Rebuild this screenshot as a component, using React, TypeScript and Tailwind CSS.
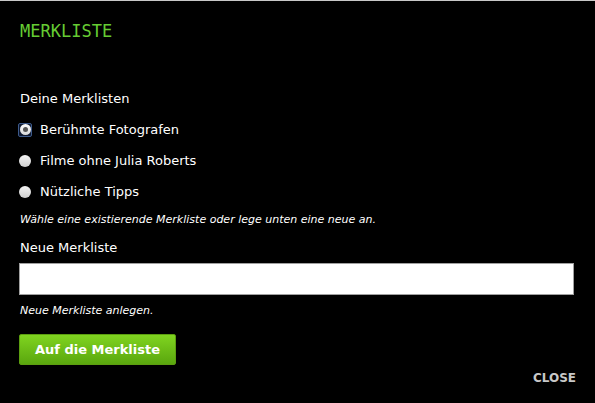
import React from "react";

function Radio({ checked }: { checked?: boolean }) {
  if (checked) {
    return (
      <span className="flex h-[14px] w-[14px] items-center justify-center rounded-[2px] border border-[#3d5a8a] bg-[#0d1830]">
        <span className="flex h-[11px] w-[11px] items-center justify-center rounded-full bg-gradient-to-b from-[#ffffff] to-[#d8d8d8]">
          <span className="h-[5px] w-[5px] rounded-full bg-[#555]" />
        </span>
      </span>
    );
  }
  return (
    <span className="flex h-[14px] w-[14px] items-center justify-center">
      <span className="h-[12px] w-[12px] rounded-full bg-gradient-to-b from-[#f4f4f4] to-[#cfcfcf]" />
    </span>
  );
}

export default function App() {
  const lists = [
    { name: "Berühmte Fotografen", checked: true },
    { name: "Filme ohne Julia Roberts" },
    { name: "Nützliche Tipps" },
  ];
  return (
    <div
      className="flex h-[403px] w-[595px] flex-col border-t border-[#c8c8c8] bg-black pl-[20px] pr-[19px] text-white"
      style={{ fontFamily: "Verdana, 'DejaVu Sans', sans-serif" }}
    >
      <div
        className="mt-[19px] h-[22px] text-[17px] leading-[22px] text-[#66cc33]"
        style={{ fontFamily: "'DejaVu Sans Mono', monospace" }}
      >
        MERKLISTE
      </div>
      <div className="mt-[49px] text-[13px] leading-[16px]">Deine Merklisten</div>
      <div className="mt-[7px] flex flex-col">
        {lists.map((l) => (
          <label key={l.name} className="flex h-[31px] items-center text-[13px] leading-[16px]">
            <span className="ml-[-2px] mr-[8px]">
              <Radio checked={l.checked} />
            </span>
            {l.name}
          </label>
        ))}
      </div>
      <div className="mt-[6px] text-[11px] italic leading-[14px]">
        Wähle eine existierende Merkliste oder lege unten eine neue an.
      </div>
      <div className="mt-[13px] text-[13px] leading-[16px]">Neue Merkliste</div>
      <div className="ml-[-1px] mt-[7px] h-[32px] w-[555px] border border-[#a0a0a0] bg-white" />
      <div className="mt-[9px] text-[11px] italic leading-[14px]">Neue Merkliste anlegen.</div>
      <div className="ml-[-1px] mt-[16px] flex h-[31px] w-[157px] items-center justify-center rounded-[2px] border border-[#5c9e10] bg-gradient-to-b from-[#80d420] to-[#5aa70e] text-[13px] font-bold text-white">
        Auf die Merkliste
      </div>
      <div className="mt-[6px] flex justify-end">
        <span className="text-[12px] font-bold leading-[14px] text-[#c8c8c8]">CLOSE</span>
      </div>
    </div>
  );
}
